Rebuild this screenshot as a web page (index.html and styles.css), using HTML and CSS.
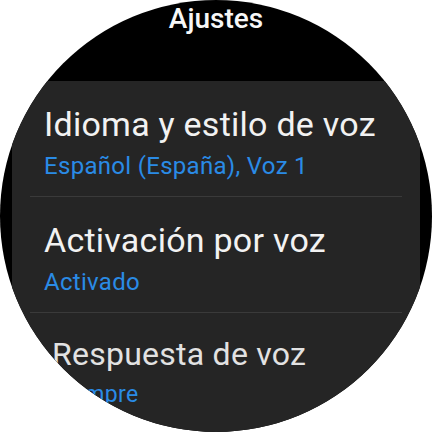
FILE: index.html
```html
<!DOCTYPE html>
<html lang="es">
<head>
<meta charset="utf-8">
<link rel="stylesheet" href="styles.css">
</head>
<body>
<div class="screen">
  <div class="header">Ajustes</div>
  <div class="card">
    <div class="item">
      <div class="item-title">Idioma y estilo de voz</div>
      <div class="item-sub">Español (España), Voz 1</div>
    </div>
    <div class="sep"></div>
    <div class="item">
      <div class="item-title">Activación por voz</div>
      <div class="item-sub">Activado</div>
    </div>
    <div class="sep"></div>
    <div class="item item-edge">
      <div class="item-title">Respuesta de voz</div>
      <div class="item-sub">Siempre</div>
    </div>
  </div>
</div>
</body>
</html>
```
FILE: styles.css
```css
html, body {
  margin: 0;
  padding: 0;
  background: #ffffff;
}
.screen {
  width: 432px;
  height: 432px;
  border-radius: 50%;
  overflow: hidden;
  background: #000000;
  display: flex;
  flex-direction: column;
  font-family: Roboto, "Noto Sans", sans-serif;
}
.header {
  height: 81px;
  flex: none;
  box-sizing: border-box;
  padding-top: 3px;
  text-align: center;
  color: #f7f7f7;
  font-size: 28px;
  font-weight: 500;
  line-height: 32px;
}
.card {
  flex: 1;
  margin: 0 12px;
  background: #252525;
  border-radius: 28px 28px 0 0;
}
.item {
  padding: 25px 31px 16px 32px;
}
.item-edge {
  padding-top: 23px;
  padding-left: 40px;
}
.item-title {
  color: #f2f2f2;
  font-size: 34px;
  line-height: 36px;
  letter-spacing: 0.25px;
  white-space: nowrap;
}
.item-edge .item-title {
  color: #e2e2e2;
  font-size: 32px;
}
.item-sub {
  margin-top: 10px;
  color: #2a8be6;
  font-size: 24px;
  line-height: 28px;
  letter-spacing: 0.3px;
  white-space: nowrap;
}
.item-edge .item-sub {
  margin-top: 9px;
  font-size: 23px;
}
.sep {
  height: 1px;
  margin: 0 18px;
  background: #3a3a3a;
}
```
